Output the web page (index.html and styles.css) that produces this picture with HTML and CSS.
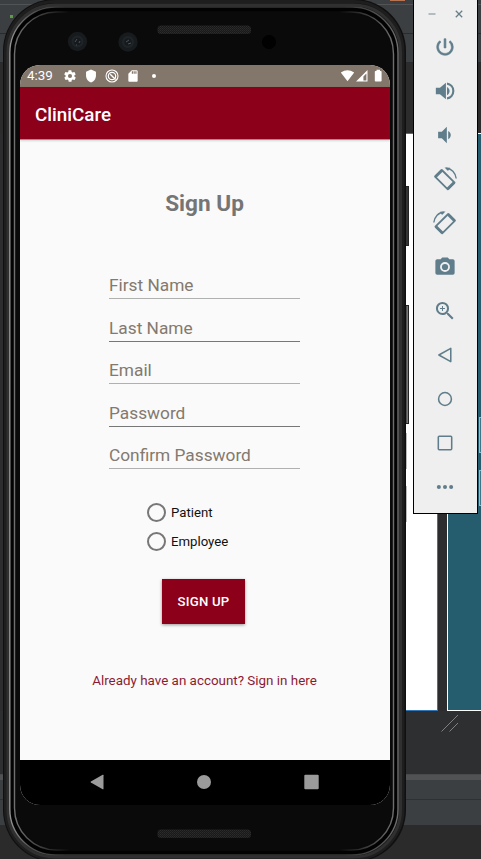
FILE: index.html
```html
<!DOCTYPE html>
<html lang="en">
<head>
<meta charset="utf-8">
<title>CliniCare</title>
<link rel="stylesheet" href="styles.css">
</head>
<body>
<div class="desktop">
  <div class="ide">
    <div class="ide-top"><i class="ide-run"></i><i class="ide-chip"></i></div>
    <div class="ide-bar"></div>
    <div class="ide-bar tabs"></div>
    <div class="ide-gap"></div>
    <div class="ide-canvas">
      <div class="design"><i></i><i></i></div>
      <div class="blueprint"><i></i><i></i></div>
    </div>
    <div class="ide-space">
      <svg width="20" height="20" viewBox="0 0 20 20"><path d="M1.500 18.500 18 2M9.500 18.500 18 10" stroke="#8b8b8b" fill="none" stroke-width=".9"/></svg>
    </div>
    <div class="ide-split"></div>
    <div class="ide-panel"></div>
    <div class="ide-panel last"></div>
  </div>

  <div class="phone">
    <i class="side-key power"></i>
    <i class="side-key volume"></i>
    <svg class="frame" width="410" height="859" viewBox="0 0 410 859" fill="none">
      <defs>
        <linearGradient id="edge" gradientUnits="userSpaceOnUse" x1="0" y1="0" x2="409" y2="0">
          <stop offset="0" stop-color="#b4b4b4"/><stop offset=".07" stop-color="#555"/><stop offset=".16" stop-color="#333"/>
          <stop offset=".84" stop-color="#333"/><stop offset=".94" stop-color="#555"/><stop offset="1" stop-color="#858585"/>
        </linearGradient>
        <linearGradient id="glint" gradientUnits="userSpaceOnUse" x1="0" y1="0" x2="409" y2="0">
          <stop offset="0" stop-color="#888"/><stop offset=".05" stop-color="#666"/><stop offset=".17" stop-color="#0a0a0a"/>
          <stop offset=".83" stop-color="#0a0a0a"/><stop offset=".95" stop-color="#666"/><stop offset="1" stop-color="#888"/>
        </linearGradient>
        <pattern id="mesh" width="2" height="2" patternUnits="userSpaceOnUse">
          <rect width="2" height="2" fill="#191919"/><rect width="1" height="1" fill="#2c2c2c"/><rect x="1" y="1" width="1" height="1" fill="#262626"/>
        </pattern>
      </defs>
      <rect x="3" y="-1" width="403" height="863" rx="52" fill="#101010"/>
      <rect x="5.500" y="1.500" width="397.500" height="858" rx="50" stroke="#1e1e1e" stroke-width="3"/>
      <rect x="8" y="5" width="392.500" height="852" rx="47" stroke="#303030" stroke-width="3"/>
      <rect x="9.800" y="7" width="388.200" height="848" rx="46" fill="#020202" stroke="url(#edge)" stroke-width="1.400"/>
      <rect x="14.500" y="12" width="379" height="838" rx="42" fill="#0a0a0a" stroke="url(#glint)" stroke-width="1.400"/>
      <rect x="16" y="14" width="376" height="834" rx="40" fill="#0a0a0a"/>
      <g><circle cx="77.500" cy="41.500" r="9.700" fill="#171b1e"/><circle cx="77.500" cy="41.500" r="6" fill="#1f2429"/><circle cx="77.500" cy="41.500" r="3.800" fill="#161a1d"/><path d="m75 42 2-3M79 43l1-2M76 45l1 0" stroke="#4a5359"/></g>
      <g><circle cx="128" cy="42" r="9.700" fill="#171b1e"/><circle cx="128" cy="42" r="6" fill="#1f2429"/><circle cx="128" cy="42" r="3.800" fill="#161a1d"/><path d="m126 42 3-2M128 44l3-1" stroke="#4a5359"/></g>
      <circle cx="269" cy="42" r="7" fill="#010101"/>
      <rect x="157.500" y="25.500" width="93.500" height="8.500" rx="3.500" fill="url(#mesh)"/>
      <rect x="157.500" y="829.500" width="93.500" height="8.500" rx="3.500" fill="url(#mesh)"/>
    </svg>

    <div class="screen">
      <div class="status">
        <span class="clock">4:39</span>
        <svg class="s-gear" width="14" height="14" viewBox="0 0 24 24"><path fill="#fff" fill-rule="evenodd" d="M19.400 13c.1-.3.100-.7.100-1s0-.7-.1-1l2.100-1.600c.2-.2.200-.4.100-.6l-2-3.500c-.1-.2-.4-.3-.6-.2l-2.500 1c-.5-.4-1.100-.7-1.700-1l-.4-2.600c0-.2-.2-.4-.5-.4h-4c-.2 0-.5.2-.5.400l-.4 2.600c-.6.300-1.200.6-1.700 1l-2.500-1c-.2-.1-.5 0-.6.200l-2 3.500c-.1.200-.1.500.1.600L4.600 11a8 8 0 0 0 0 2l-2.100 1.600c-.2.200-.2.400-.1.600l2 3.500c.1.200.4.300.6.200l2.500-1c.5.400 1.100.7 1.700 1l.4 2.600c0 .2.300.4.500.4h4c.3 0 .5-.2.500-.4l.4-2.600c.6-.3 1.200-.6 1.700-1l2.500 1c.2.100.5 0 .6-.2l2-3.500c.1-.2.100-.5-.1-.6zM12 15.500a3.500 3.500 0 1 1 0-7 3.500 3.500 0 0 1 0 7z"/></svg>
        <svg class="s-shield" width="14" height="14" viewBox="0 0 24 24"><path fill="#fff" d="M12 1 3.500 4.500V11c0 5.500 3.500 10.500 8.500 12 5-1.500 8.500-6.500 8.500-12V4.500z"/></svg>
        <svg class="s-round" width="14" height="14" viewBox="0 0 14 14" fill="none" stroke="#fff"><circle cx="7" cy="7" r="6" stroke-width="1.100"/><circle cx="7" cy="7" r="3.700" stroke-width="1.200"/><path d="M5.200 5.200 10.600 10.600" stroke-width="1.400"/></svg>
        <svg class="s-sd" width="14" height="14" viewBox="0 0 24 24"><path fill="#fff" fill-rule="evenodd" d="M18 2h-8L4 8v12c0 1.100.9 2 2 2h12c1.100 0 2-.9 2-2V4a2 2 0 0 0-2-2zm-6 6h-2V4h2zm3 0h-2V4h2zm3 0h-2V4h2z"/></svg>
        <i class="s-dot"></i>
        <svg class="s-right" width="43" height="14" viewBox="0 0 43 14"><path fill="#fff" d="M.8 3.600Q7.500-1.200 14.200 3.600L7.500 12.300z"/><path fill="#fff" fill-rule="evenodd" d="M27.500 1v11.500H16zM26.400 4.500l-3 3v4h3z"/><path fill="#fff" d="M36.500.8h3.500V2h.8q.8 0 .8.800v9q0 .7-.8.700h-5.200q-.8 0-.8-.7v-9q0-.8.8-.8h.900z"/></svg>
      </div>
      <div class="appbar">CliniCare</div>
      <div class="content">
        <h1>Sign Up</h1>
        <div class="fields">
          <div class="field">First Name</div>
          <div class="field dark">Last Name</div>
          <div class="field">Email</div>
          <div class="field dark">Password</div>
          <div class="field">Confirm Password</div>
        </div>
        <div class="radios">
          <div class="radio"><i></i><span>Patient</span></div>
          <div class="radio"><i></i><span>Employee</span></div>
        </div>
        <div class="submit">SIGN UP</div>
        <div class="signin">Already have an account? Sign in here</div>
      </div>
      <div class="navbar">
        <svg width="14" height="16" viewBox="0 0 14 16"><path fill="#9b9b9b" d="M13.500 1.200v13.600q0 .8-.8.400L.9 8.600q-.8-.6 0-1.200L12.700.8q.8-.4.800.4z"/></svg>
        <svg width="14" height="16" viewBox="0 0 14 16"><circle cx="7" cy="8" r="7" fill="#9b9b9b"/></svg>
        <svg width="15" height="16" viewBox="0 0 15 16"><rect x=".3" y=".8" width="14.400" height="14.400" rx="1" fill="#9b9b9b"/></svg>
      </div>
    </div>
  </div>

  <div class="tools">
    <div class="winctl">
      <svg width="8" height="8" viewBox="0 0 8 8"><path d="M.5 4h7" stroke="#98a6ad" stroke-width="1.400"/></svg>
      <svg width="8" height="8" viewBox="0 0 8 8"><path d="m.8.8 6.400 6.400M7.200.8.800 7.200" stroke="#687f8a" stroke-width="1.300"/></svg>
    </div>
    <div class="tool"><svg viewBox="0 0 24 24"><path d="M13 3h-2v10h2zm4.830 2.170-1.420 1.420A6.920 6.920 0 0 1 19 12a7 7 0 1 1-11.420-5.410L6.170 5.170A9 9 0 1 0 21 12a8.940 8.940 0 0 0-3.170-6.830z" stroke="#607d8b" stroke-width=".7"/></svg></div>
    <div class="tool"><svg viewBox="0 0 24 24"><path d="M2 8.500v7h4.500L13 21V3L6.500 8.500zM14.200 7.500v9c1.700-.8 2.800-2.500 2.800-4.500s-1.100-3.700-2.800-4.500zM14.200 2.700v2.500a6.900 6.900 0 0 1 0 13.600v2.500a9.400 9.400 0 0 0 0-18.600z"/></svg></div>
    <div class="tool"><svg viewBox="0 0 24 24"><path d="M4.500 8.500v7h4L14 21V3L8.500 8.500zM15.500 7.500v9c1.700-.8 2.800-2.500 2.800-4.500s-1.100-3.700-2.800-4.500z"/></svg></div>
    <div class="tool"><svg class="wide" viewBox="0 0 24 24"><path class="line" d="M8.800 3 21.600 15.600 14.800 22.300 2 9.700z"/><path class="ends" d="M8.800 3.500 2.500 9.700M21.100 15.600 14.800 21.800"/><path class="arc" d="M13 1.300C18.500 1.300 22.500 5.500 23.200 11.500"/><path d="m11.500.6 5.500.2-2 3.200z"/></svg></div>
    <div class="tool"><svg class="wide flip" viewBox="0 0 24 24"><path class="line" d="M8.800 3 21.600 15.600 14.800 22.300 2 9.700z"/><path class="ends" d="M8.800 3.500 2.500 9.700M21.100 15.600 14.800 21.800"/><path class="arc" d="M13 1.300C18.500 1.300 22.500 5.500 23.200 11.500"/><path d="m11.500.6 5.500.2-2 3.200z"/></svg></div>
    <div class="tool"><svg viewBox="0 0 24 24"><path fill-rule="evenodd" d="M9 1.500 7.200 3.500H3.500q-2 0-2 2v13q0 2 2 2h17q2 0 2-2v-13q0-2-2-2h-3.700L15 1.500zM12 17.400a5.400 5.400 0 1 1 0-10.800 5.400 5.400 0 0 1 0 10.800z"/><circle cx="12" cy="12" r="3.400"/></svg></div>
    <div class="tool"><svg viewBox="0 0 24 24"><path d="M15.500 14h-.79l-.28-.27A6.470 6.470 0 0 0 16 9.500 6.500 6.500 0 1 0 9.500 16c1.610 0 3.090-.59 4.230-1.570l.27.28v.79l5 4.990L20.490 19zm-6 0a4.500 4.500 0 1 1 0-9 4.500 4.500 0 0 1 0 9zm2.500-4h-2v2H9v-2H7V9h2V7h1v2h2z" transform="translate(-1.200 -1.200) scale(1.100)"/></svg></div>
    <div class="tool"><svg viewBox="0 0 24 24"><path fill="none" stroke="#607d8b" stroke-width="1.700" stroke-linejoin="round" d="M18.300 4.800v14.400L5.300 12z"/></svg></div>
    <div class="tool"><svg viewBox="0 0 24 24"><circle cx="12" cy="12" r="7" fill="none" stroke="#607d8b" stroke-width="1.700"/></svg></div>
    <div class="tool"><svg viewBox="0 0 24 24"><rect x="4.700" y="4.700" width="14.600" height="14.600" rx="1" fill="none" stroke="#607d8b" stroke-width="1.700"/></svg></div>
    <div class="tool"><svg viewBox="0 0 24 24"><circle cx="5.300" cy="12" r="2.200"/><circle cx="12" cy="12" r="2.200"/><circle cx="18.700" cy="12" r="2.200"/></svg></div>
  </div>
</div>
</body>
</html>
```
FILE: styles.css
```css
* { box-sizing: border-box; }
body { margin: 0; font-family: Roboto, "Liberation Sans", sans-serif; }
svg { display: block; flex: none; }

.desktop { position: relative; width: 481px; height: 859px; overflow: hidden; background: #2b2b2b; }

/* Editor behind the emulator */
.ide { display: flex; flex-direction: column; height: 859px; }
.ide-top { height: 5px; background: #3c3f41; border-bottom: 1px solid #515355; display: flex; justify-content: flex-end; position: relative; }
.ide-chip { width: 15px; height: 1px; margin-right: 76px; background: #b87352; }
.ide-run { position: absolute; left: 10px; top: 15px; width: 3px; height: 3px; background: #5f9c45; }
.ide-bar { height: 29px; background: #3c3f41; border-bottom: 1px solid #292b2c; }
.ide-gap { height: 70px; background: #2c2c2d; }
.ide-canvas { height: 578px; display: flex; gap: 9px; background: #2d2d2f; padding-left: 200px; }
.design { width: 238px; flex: none; background: #fff; border: 1px solid #3476b5; border-left: 0; display: flex; flex-direction: column; align-items: flex-end; gap: 17px; padding: 299px 30px 0 0; }
.design i { width: 3px; height: 36px; background: #bbb; flex: none; }
.blueprint { flex: 1; background: #255c6e; border: 1px solid #fff; border-right: 0; display: flex; flex-direction: column; align-items: flex-end; gap: 17px; padding-top: 283px; }
.blueprint i { width: 2px; height: 36px; border: 1px solid #7fc4d6; border-right: 0; background: #3a7889; flex: none; }
.ide-space { height: 63px; background: #2d2f31; display: flex; justify-content: flex-end; padding: 2px 21px 0 0; }
.ide-split { height: 6px; background: #515254; border-top: 1px solid #484a4c; }
.ide-panel { height: 20px; background: #3c3f41; border-bottom: 1px solid #2e3032; }
.ide-panel.last { height: 25px; border: 0; }

/* Device */
.phone { position: absolute; left: 0; top: 0; width: 410px; height: 859px; padding: 65px 0 0 20px; }
.frame { position: absolute; left: 0; top: 0; }
.side-key { position: absolute; left: 403px; width: 6px; background: #343434; border: 1px solid #242424; }
.side-key.power { top: 186px; height: 60px; }
.side-key.volume { top: 305px; height: 119px; background: linear-gradient(90deg, #333 40%, #8a8a8a); }

.screen { position: relative; width: 370px; height: 740px; border-radius: 20px; overflow: hidden; background: #fafafa; display: flex; flex-direction: column; }
.status { height: 22px; background: #83766b; display: flex; align-items: center; color: #fff; padding: 0 7px; flex: none; }
.clock { font-size: 13.4px; line-height: 22px; width: 36px; }
.s-shield { margin-left: 7px; }
.s-round { margin-left: 7px; }
.s-sd { margin-left: 7px; }
.s-dot { width: 4px; height: 4px; border-radius: 50%; background: #fff; margin-left: 12px; }
.s-right { margin-left: auto; }
.appbar { height: 53px; background: #8c001a; color: #fff; font-size: 18.8px; font-weight: 500; line-height: 56px; padding-left: 15px; flex: none; border-bottom: 1px solid #b9848d; box-shadow: 0 1px 2px rgba(0,0,0,.15); }
.content { flex: 1; display: flex; flex-direction: column; align-items: center; padding-right: 1px; }
h1 { margin: 50px 0 0; font-size: 22.6px; line-height: 28px; font-weight: 700; color: #757575; }
.fields { width: 191px; margin-top: 38.5px; }
.field { height: 42.5px; padding-top: 16.5px; font-size: 17.3px; line-height: 25px; color: #83796f; border-bottom: 1px solid #aeb1ae; white-space: nowrap; }
.field.dark { border-color: #777; }
.radios { width: 117px; margin-top: 29.5px; }
.radio { height: 28.5px; display: flex; align-items: center; gap: 5px; padding-left: 1px; font-size: 13.2px; color: #111; }
.radio i { width: 19px; height: 19px; border: 2px solid #777; border-radius: 50%; }
.submit { width: 83px; height: 45px; margin: 23.5px 2px 0 0; background: #8c001a; color: #fff; font-size: 13.2px; font-weight: 500; letter-spacing: .2px; line-height: 46px; text-align: center; box-shadow: 0 1px 3px rgba(0,0,0,.4); }
.signin { margin-top: 48px; font-size: 13.4px; line-height: 18px; color: #8c1a32; white-space: nowrap; }
.navbar { height: 45px; background: #000; display: flex; align-items: center; justify-content: space-between; padding: 0 71px 1px 70px; flex: none; }

/* Emulator toolbar */
.tools { position: absolute; left: 413px; top: 0; width: 65px; height: 514px; background: #efefef; border: 1px solid #000; border-top: 0; }
.winctl { height: 25px; display: flex; justify-content: space-between; padding: 10px 14px 0; }
.tool { height: 44px; display: flex; align-items: center; justify-content: center; padding-right: 1px; }
.tool svg { width: 22px; height: 22px; fill: #607d8b; }
.tool svg.wide { width: 24px; height: 24px; }
.tool .line, .tool .ends, .tool .arc { fill: none; stroke: #607d8b; stroke-width: 1.8; stroke-linejoin: round; }
.tool .ends { stroke-width: 2.8; }
.tool .arc { stroke-width: 1.4; }
.flip { transform: scaleX(-1); }
```
